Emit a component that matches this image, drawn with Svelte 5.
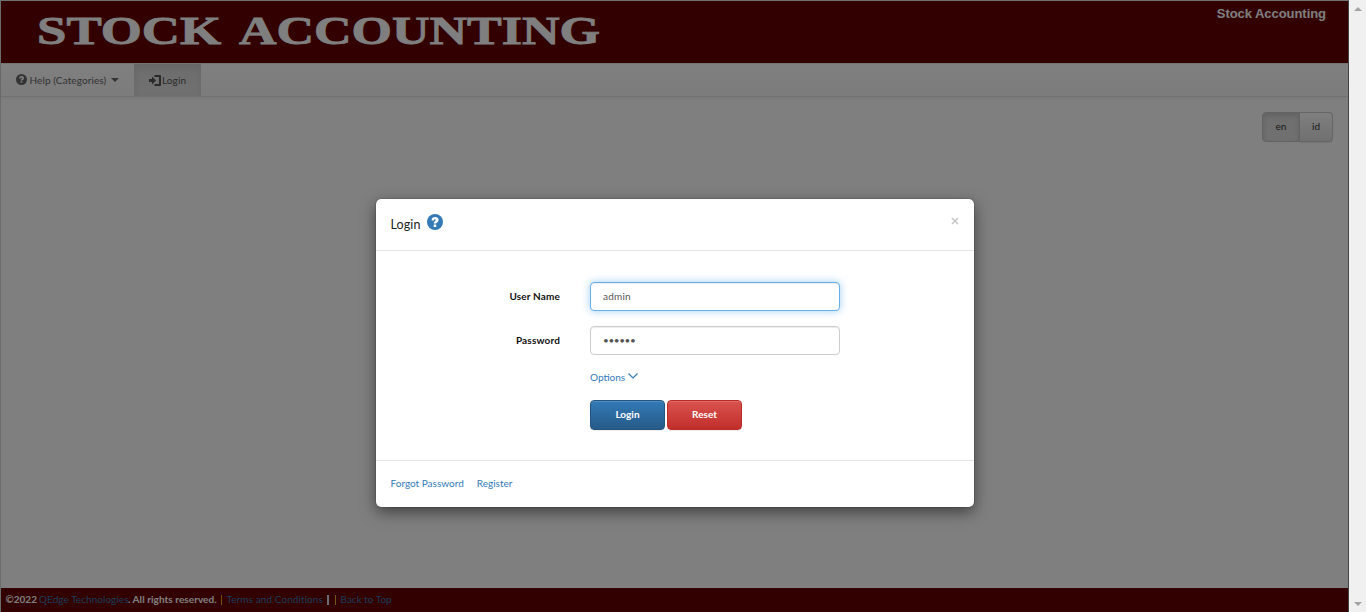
<script>
  let username = $state('admin');
  let password = $state('secret');
</script>

{#snippet question()}
  <svg class="question" viewBox="0 0 16 16" aria-hidden="true">
    <circle cx="8" cy="8" r="8" fill="currentColor" />
    <path class="mark" d="M4.600 6.400C4.600 4 6 3 8.100 3s3.500 1.100 3.500 3c0 2.200-2.300 2.300-2.400 3.600H6.700c0-2.300 2-2.400 2-3.600 0-.5-.3-.8-.8-.8-.6 0-.9.4-.9 1.200zM6.700 10.500h2.500v2.400H6.700z" />
  </svg>
{/snippet}

<div class="window">
  <div class="page">
    <header>
      <svg class="brand" width="620" height="62" role="img">
        <text x="36" y="43.2" textLength="184" lengthAdjust="spacingAndGlyphs">STOCK</text>
        <text x="238" y="43.2" textLength="361" lengthAdjust="spacingAndGlyphs">ACCOUNTING</text>
      </svg>
      <span class="site">Stock Accounting</span>
    </header>
    <nav>
      <a class="help" href="#help">{@render question()}<span>Help (Categories)</span><i class="caret"></i></a>
      <a class="active" href="#login">
        <svg width="12" height="11" viewBox="0 0 12 11"><path d="M0 4h3V1.500L7 5.500 3 9.500V7H0z" fill="currentColor" /><path d="M5.500 1H11v9H5.500" fill="none" stroke="currentColor" stroke-width="2" stroke-linejoin="round" /></svg>
        <span>Login</span>
      </a>
    </nav>
    <main>
      <div class="langs"><button class="on">en</button><button>id</button></div>
    </main>
    <footer>
      <b class="year">©2022</b><a class="company" href="#company">QEdge Technologies</a><b class="rights">. All rights reserved.</b>
      <i class="bar gold"></i><a class="terms" href="#terms">Terms and Conditions</a><i class="bar"></i><i class="bar gold second"></i><a class="top" href="#top">Back to Top</a>
    </footer>
  </div>

  <div class="scrollbar"><i class="up"></i><i class="down"></i></div>

  <div class="overlay">
    <section class="modal">
      <div class="modal-head">
        <h4>Login</h4>
        {@render question()}
        <svg class="close" width="8" height="8" viewBox="0 0 8 8"><path d="M1 1l6 6M7 1L1 7" stroke="#c8c8c8" stroke-width="1.700" /></svg>
      </div>
      <form onsubmit={(e) => e.preventDefault()}>
        <label for="user">User Name</label>
        <input id="user" class="focused" bind:value={username} />
        <label for="pass">Password</label>
        <input id="pass" type="password" bind:value={password} />
        <a class="options" href="#options"><span>Options</span><svg width="10" height="6" viewBox="0 0 10 6"><path d="M.5.5L5 5 9.500.5" fill="none" stroke="currentColor" stroke-width="1.200" /></svg></a>
        <div class="actions"><button class="primary">Login</button><button class="danger" type="button">Reset</button></div>
      </form>
      <div class="modal-foot"><a href="#forgot">Forgot Password</a><a href="#register">Register</a></div>
    </section>
  </div>
</div>

<style>
  :global(body) { margin: 0; overflow: hidden; }
  * { box-sizing: border-box; }
  a { color: #337ab7; text-decoration: none; }
  .window { position: relative; display: flex; width: 1366px; height: 612px; font: 10px/14px Lato, sans-serif; color: #222; }
  .page { display: flex; flex-direction: column; width: 1349px; background: #fff; border-top: 1px solid #dce4e1; border-left: 1px solid #d8d8d8; border-right: 1px solid #888; }
  header { display: flex; justify-content: space-between; height: 62px; background: #600; }
  .brand text { font: bold 41px "Liberation Serif", serif; fill: #fff; stroke: #fff; stroke-width: .8; }
  .site { padding: 4px 22px 0 0; font: bold 13px/17px "Liberation Sans", sans-serif; letter-spacing: -.05px; color: #fff; }
  nav { display: flex; height: 34px; border-top: 1px solid #e7e7e7; border-bottom: 1px solid #e2e2e2; background: linear-gradient(#fff, #f8f8f8); box-shadow: 0 1px 5px rgba(0,0,0,.075); }
  nav a { display: flex; align-items: center; color: #666; }
  .question { display: block; fill: currentColor; }
  .question .mark { fill: #fff; }
  .help { width: 133px; padding-left: 15px; letter-spacing: .1px; }
  .help .question { width: 11px; height: 11px; margin: -2px 2.500px 0 0; color: #666; }
  .caret { margin-left: 5px; border: 4px solid transparent; border-top-color: #666; border-bottom: 0; }
  .active { width: 67px; padding-left: 15px; gap: 1px; color: #555; background: linear-gradient(#dbdbdb, #e2e2e2); box-shadow: inset 0 3px 9px rgba(0,0,0,.075); }
  .active span { letter-spacing: .1px; }
  main { display: flex; justify-content: flex-end; flex: 1; padding: 15px 15px 0 0; }
  .langs { display: flex; width: 71px; height: 30px; }
  button { font: inherit; cursor: pointer; }
  .langs button { flex: 1; padding: 0 0 2px; border: 1px solid #ccc; border-left: 0; border-radius: 0 4px 4px 0; background: linear-gradient(#fff, #e0e0e0); color: #333; box-shadow: 0 1px 1px rgba(0,0,0,.08); }
  .langs .on { flex: 0 0 38px; border: 1px solid #c6c6c6; border-radius: 4px 0 0 4px; background: #e0e0e0; box-shadow: inset 0 3px 5px rgba(0,0,0,.125); }
  footer { display: flex; align-items: center; height: 24px; padding: 0 0 2px 4.500px; background: #600; color: #fff; white-space: pre; }
  .year { width: 33.500px; }
  .company { width: 89px; letter-spacing: .05px; }
  .rights { width: 88px; letter-spacing: .06px; }
  .terms { width: 96px; letter-spacing: .08px; }
  footer .bar { width: 1.500px; height: 10px; margin: 1px 4.500px 0 4.500px; background: #ddd; }
  footer .second { margin-left: 1.500px; }
  footer .gold { background: #e0aa20; }
  .scrollbar { display: flex; flex-direction: column; justify-content: space-between; align-items: center; width: 17px; padding: 7px 0 6px; background: #f0f0f0; }
  .scrollbar i { border: 4px solid transparent; }
  .up { border-top: 0 !important; border-bottom-color: #a3a3a3 !important; }
  .down { border-bottom: 0 !important; border-top-color: #a3a3a3 !important; }
  .overlay { position: absolute; inset: 0 17px 0 0; padding: 199px 0 0 376px; background: rgba(0,0,0,.5); }
  .modal { width: 598px; height: 308px; border-radius: 5px; background: #fff; box-shadow: 0 5px 15px rgba(0,0,0,.5), 0 0 1px #000; }
  .modal-head { display: flex; height: 52px; padding: 15px 15px 15px 14.500px; border-bottom: 1px solid #e5e5e5; }
  h4 { margin: 3px 6.500px 0 0; font: 12.500px/16px Lato, sans-serif; letter-spacing: .1px; color: #222; }
  .modal-head .question { width: 16px; height: 16px; color: #337ab7; }
  .close { margin: 3px 0 0 auto; }
  form { display: grid; grid-template-columns: 184px 250px; grid-template-rows: 29px 29px 15px 30px; column-gap: 30px; height: 209px; padding-top: 31px; row-gap: 15px; }
  label { padding-top: 7px; font-weight: bold; letter-spacing: .15px; text-align: right; color: #111; }
  input { width: 250px; height: 29px; padding: 0 12px 2px; border: 1px solid #ccc; border-radius: 4px; outline: 0; font: inherit; letter-spacing: .2px; color: #555; box-shadow: inset 0 1px 1px rgba(0,0,0,.075); }
  input[type='password'] { letter-spacing: -.4px; }
  .focused { border-color: #66afe9; box-shadow: inset 0 1px 1px rgba(0,0,0,.075), 0 0 8px rgba(102,175,233,.6); }
  .options { grid-column: 2; display: flex; gap: 3px; }
  .options svg { margin-top: 3px; }
  .actions { grid-column: 2; display: flex; gap: 2px; }
  .actions button { width: 75px; height: 30px; padding: 0 0 2px; border: 1px solid #245580; border-radius: 4px; background: linear-gradient(#337ab7, #265a88); color: #fff; font-weight: bold; box-shadow: inset 0 1px 0 rgba(255,255,255,.15), 0 1px 1px rgba(0,0,0,.075); }
  .actions .danger { border-color: #b92c28; background: linear-gradient(#d9534f, #c12e2a); }
  .modal-foot { display: flex; gap: 13px; padding: 15px 14.500px; border-top: 1px solid #e5e5e5; }
</style>
